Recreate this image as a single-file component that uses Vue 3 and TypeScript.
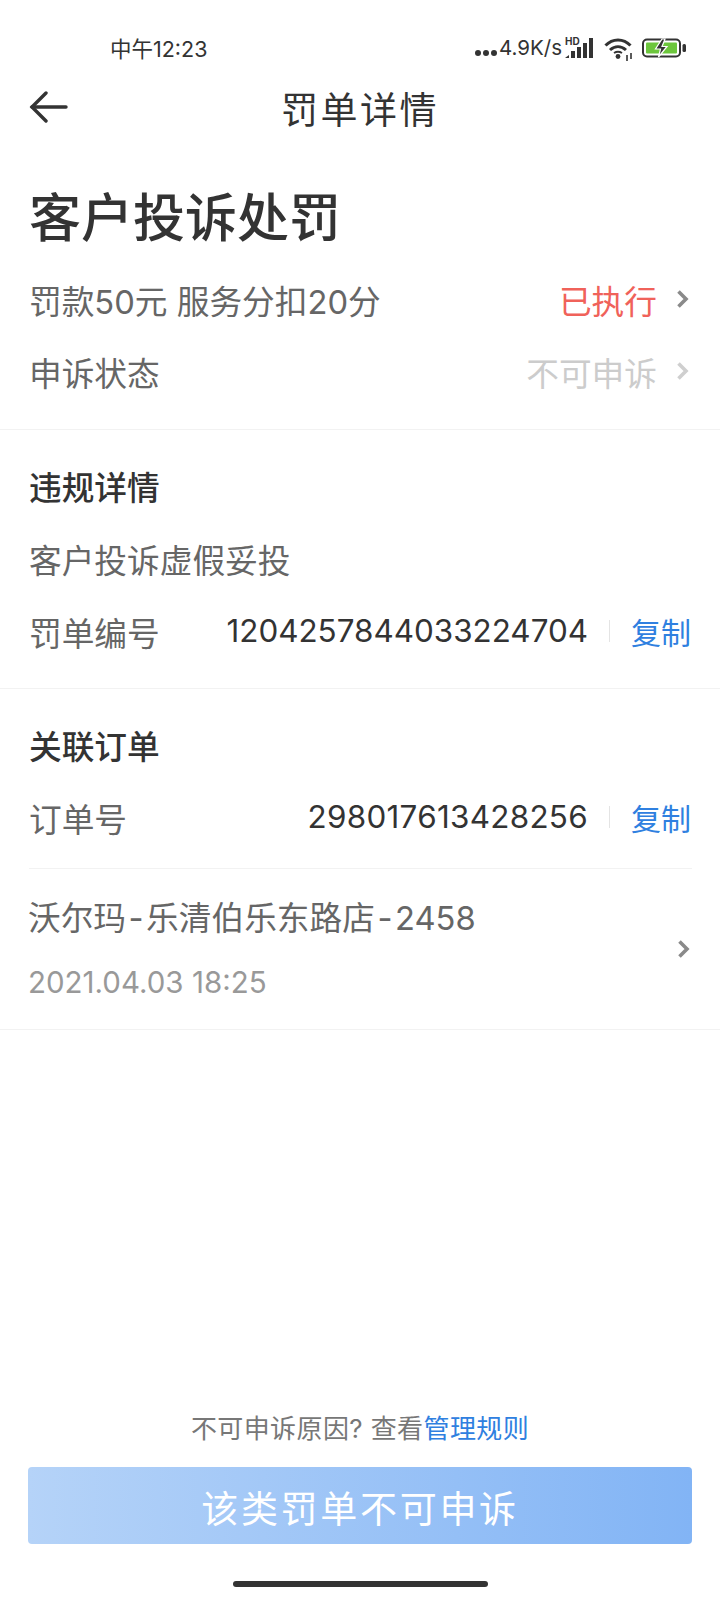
<template>
  <div class="page">
    <div class="status">
      <span class="time">中午12:23</span>
      <div class="status-right">
        <span class="dots"><i></i><i></i><i></i></span>
        <span class="speed">4.9K/s</span>
        <svg class="signal" width="30" height="24" viewBox="0 0 30 24">
          <text x="1" y="9" class="hd">HD</text>
          <path d="M1 22l4-3v3z" fill="#333" />
          <rect x="7" y="15" width="4" height="7" fill="#333" />
          <rect x="13" y="11" width="4" height="11" fill="#333" />
          <rect x="19" y="7" width="4" height="15" fill="#333" />
          <rect x="25" y="2" width="4" height="20" fill="#333" />
        </svg>
        <svg class="wifi" width="30" height="24" viewBox="0 0 30 24" fill="none" stroke="#333" stroke-width="3">
          <path d="M1.500 8.500C8.500 1 19.500 1 26.500 8.500" />
          <path d="M6 13C11 8.500 17 8.500 22 13" />
          <circle cx="14" cy="19.500" r="2.400" fill="#333" stroke="none" />
          <path d="M10 16C12.500 14.500 15.500 14.500 18 16" stroke-width="2" />
          <path d="M23 18v6M27 16v6" stroke-width="1.600" />
        </svg>
        <svg class="battery" width="45" height="20" viewBox="0 0 45 20">
          <rect x="1" y="1.500" width="37" height="17" rx="4" fill="none" stroke="#333" stroke-width="2" />
          <rect x="4" y="4.500" width="31" height="11" rx="1" fill="#6cc63c" />
          <path d="M20 1L13.500 11h5L16.500 19 25 8.500h-5L23 1z" fill="#333" stroke="#fff" stroke-width="1.200" />
          <rect x="40.500" y="6" width="3.500" height="8" rx="1.500" fill="#333" />
        </svg>
      </div>
    </div>

    <div class="nav">
      <svg class="back" width="40" height="32" viewBox="0 0 40 32" fill="none" stroke="#333" stroke-width="3.400" stroke-linecap="round">
        <path d="M3 16H37" />
        <path d="M17 2L3 16l14 14" />
      </svg>
      <span class="nav-title">罚单详情</span>
    </div>

    <section class="head">
      <h1 class="big">客户投诉处罚</h1>
      <div class="row first">
        <span>罚款50元 服务分扣20分</span>
        <span class="state red">已执行<svg class="arrow" width="14" height="20" viewBox="0 0 14 20" fill="none" stroke="#8a8a8a" stroke-width="3.600"><path d="M2.500 2.500L10 10l-7.500 7.500" /></svg></span>
      </div>
      <div class="row second">
        <span>申诉状态</span>
        <span class="state grey">不可申诉<svg class="arrow" width="14" height="20" viewBox="0 0 14 20" fill="none" stroke="#cfcfcf" stroke-width="3.600"><path d="M2.500 2.500L10 10l-7.500 7.500" /></svg></span>
      </div>
    </section>

    <section class="block">
      <h2>违规详情</h2>
      <div class="row reason">客户投诉虚假妥投</div>
      <div class="row number">
        <span>罚单编号</span>
        <span class="value">{{ penaltyNo }}<i class="sep"></i><a class="copy">复制</a></span>
      </div>
    </section>

    <section class="block order">
      <h2>关联订单</h2>
      <div class="row order-no">
        <span>订单号</span>
        <span class="value">{{ orderNo }}<i class="sep"></i><a class="copy">复制</a></span>
      </div>
    </section>

    <section class="shop-wrap">
      <div class="shop">
        <div>
          <div class="shop-name">沃尔玛<span class="dash">-</span>乐清伯乐东路店<span class="dash">-</span>2458</div>
          <div class="shop-time">2021.04.03 18:25</div>
        </div>
        <svg class="arrow" width="14" height="20" viewBox="0 0 14 20" fill="none" stroke="#8a8a8a" stroke-width="3.600"><path d="M2.500 2.500L10 10l-7.500 7.500" /></svg>
      </div>
    </section>

    <div class="footer">
      <p class="hint">不可申诉原因? 查看<a>管理规则</a></p>
      <button class="submit">该类罚单不可申诉</button>
      <div class="home-bar"></div>
    </div>
  </div>
</template>

<script setup lang="ts">
const penaltyNo: string = "1204257844033224704";
const orderNo: string = "298017613428256";
</script>

<style>
body {
  background: #fff;
}
</style>

<style scoped>
.page {
  width: 720px;
  height: 1600px;
  display: flex;
  flex-direction: column;
  background: #fff;
  color: #333;
  font-family: Inter, "Noto Sans CJK SC", sans-serif;
  overflow: hidden;
}

.status {
  height: 74px;
  padding: 21px 33px 0 110px;
  box-sizing: border-box;
  display: flex;
  justify-content: space-between;
  align-items: center;
}

.time {
  font-size: 21.500px;
}

.status-right {
  display: flex;
  align-items: center;
  height: 30px;
}

.dots {
  display: flex;
  gap: 2px;
  margin-top: 10px;
  margin-right: 2px;
}

.dots i {
  width: 6px;
  height: 6px;
  border-radius: 50%;
  background: #333;
}

.speed {
  font-size: 20.500px;
}

.hd {
  font-size: 10px;
  font-weight: 700;
  fill: #333;
}

.signal {
  margin-left: 2px;
  margin-top: 1px;
}

.wifi {
  margin-left: 10px;
  margin-top: 2px;
}

.battery {
  margin-left: 8px;
}

.nav {
  height: 68px;
  display: flex;
  align-items: center;
  justify-content: center;
  position: relative;
}

.back {
  position: absolute;
  left: 29px;
  top: 17px;
}

.nav-title {
  font-size: 37px;
  letter-spacing: 2.500px;
}

.head {
  padding: 0 29px 0 29px;
  height: 288px;
  box-sizing: border-box;
  border-bottom: 1px solid #f2f2f2;
}

.big {
  margin: 43px 0 0;
  font-size: 52px;
  line-height: 68px;
  font-weight: 500;
}

.row {
  display: flex;
  justify-content: space-between;
  align-items: center;
  font-size: 32.700px;
  color: #666;
  height: 46px;
}

.first {
  margin-top: 23px;
}

.second {
  margin-top: 26px;
}

.state {
  display: flex;
  align-items: center;
}

.red {
  color: #f0625a;
}

.grey {
  color: #cccccc;
}

.arrow {
  margin-left: 19px;
  margin-right: 1px;
  flex: none;
}

.block {
  padding: 35px 29px 0 29px;
  height: 259px;
  box-sizing: border-box;
  border-bottom: 1px solid #f2f2f2;
}

.block h2 {
  margin: 0;
  font-size: 32.700px;
  line-height: 46px;
  font-weight: 500;
  color: #333;
}

.reason {
  margin-top: 24px;
}

.number {
  margin-top: 27px;
}

.order-no {
  margin-top: 24px;
}

.order {
  height: 179px;
  border-bottom: none;
}

.value {
  display: flex;
  align-items: center;
  color: #333;
  font-size: 31.400px;
}

.order-no .value {
  letter-spacing: 0.300px;
}

.sep {
  width: 1px;
  height: 22px;
  background: #e4e4e4;
  margin: 0 21px;
}

.copy {
  color: #2f80e0;
  font-size: 30px;
  letter-spacing: 0;
}

.shop-wrap {
  padding-left: 29px;
  padding-right: 28px;
  border-bottom: 1px solid #f2f2f2;
}

.shop {
  height: 161px;
  box-sizing: border-box;
  border-top: 1px solid #f2f2f2;
  display: flex;
  justify-content: space-between;
  align-items: center;
}

.shop-name {
  font-size: 32.700px;
  line-height: 46px;
  color: #666;
  margin-left: -1px;
}

.dash {
  padding: 0 2.500px;
}

.shop-time {
  font-size: 29.500px;
  line-height: 42px;
  margin-top: 20px;
  margin-left: -1px;
  color: #999;
}

.footer {
  margin-top: auto;
  display: flex;
  flex-direction: column;
  align-items: center;
}

.hint {
  margin: 0;
  font-size: 26px;
  line-height: 36px;
  color: #777;
  letter-spacing: 0.400px;
  position: relative;
  top: 1px;
}

.hint a {
  color: #2f80e0;
}

.submit {
  margin-top: 21px;
  width: 664px;
  height: 77px;
  border: none;
  border-radius: 4px;
  background: linear-gradient(90deg, #b5d3f8, #82b4f5);
  color: #fff;
  font-family: inherit;
  font-size: 37px;
  letter-spacing: 2.700px;
  padding-top: 3px;
}

.home-bar {
  width: 255px;
  height: 6px;
  margin: 37px 0 13px;
  border-radius: 3px;
  background: #333;
}
</style>
